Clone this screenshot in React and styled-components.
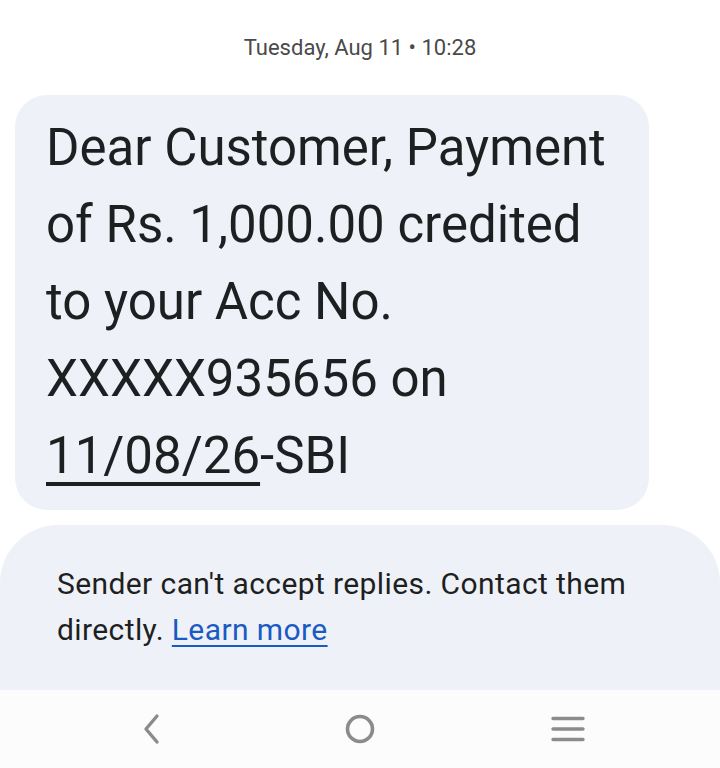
import React from 'react';
import styled, { createGlobalStyle } from 'styled-components';

const GlobalStyle = createGlobalStyle`
  html, body {
    margin: 0;
    padding: 0;
    background: #ffffff;
    font-family: Roboto, "Noto Sans", sans-serif;
  }
`;

const Screen = styled.div`
  width: 720px;
  height: 768px;
  display: flex;
  flex-direction: column;
  overflow: hidden;
  background: #ffffff;
`;

const Thread = styled.div`
  flex: 1;
  display: flex;
  flex-direction: column;
`;

const Stamp = styled.div`
  text-align: center;
  padding-top: 35px;
  height: 95px;
  box-sizing: border-box;
  font-size: 22px;
  color: #4a4a4a;
`;

const Bubble = styled.div`
  margin-left: 15px;
  width: 634px;
  box-sizing: border-box;
  padding: 14px 40px 16px 31px;
  background: #eef2f8;
  border-radius: 32px;
  font-size: 51px;
  line-height: 77px;
  color: #1e1f21;
`;

const DateLink = styled.span`
  text-decoration: underline;
  text-decoration-thickness: 4px;
  text-underline-offset: 9px;
`;

const Notice = styled.div`
  flex: 1;
  margin-top: 15px;
  box-sizing: border-box;
  padding: 36px 50px 0 57px;
  background: #eef2f8;
  border-radius: 58px 58px 0 0;
  font-size: 30px;
  letter-spacing: 0.4px;
  line-height: 46px;
  color: #1e1f21;
`;

const LearnMore = styled.a`
  color: #1a5ac2;
  text-decoration: underline;
  text-decoration-thickness: 2px;
  text-underline-offset: 5px;
`;

const NavBar = styled.nav`
  height: 78px;
  background: #fcfcfc;
  display: grid;
  grid-template-columns: repeat(3, 1fr);
  align-items: center;
  justify-items: center;
  padding: 0 48px;
`;

const NavButton = styled.div`
  width: 40px;
  height: 40px;
  display: flex;
  align-items: center;
  justify-content: center;
  color: #8b8b8b;
`;

const App = () => (
  <Screen>
    <GlobalStyle />
    <Thread>
      <Stamp>Tuesday, Aug 11 • 10:28</Stamp>
      <Bubble>
        Dear Customer, Payment of Rs. 1,000.00 credited to your Acc No. XXXXX935656 on{' '}
        <DateLink>11/08/26</DateLink>-SBI
      </Bubble>
      <Notice>
        Sender can't accept replies. Contact them directly.{' '}
        <LearnMore href="#">Learn more</LearnMore>
      </Notice>
    </Thread>
    <NavBar>
      <NavButton>
        <svg width="24" height="34" viewBox="0 0 24 34">
          <path d="M17 4 L6 17 L17 30" fill="none" stroke="currentColor" strokeWidth="3.4" strokeLinecap="round" strokeLinejoin="round" />
        </svg>
      </NavButton>
      <NavButton>
        <svg width="34" height="34" viewBox="0 0 34 34">
          <circle cx="17" cy="17" r="12.5" fill="none" stroke="currentColor" strokeWidth="3.6" />
        </svg>
      </NavButton>
      <NavButton>
        <svg width="36" height="32" viewBox="0 0 36 32">
          <path d="M3 5.5 H33 M3 16 H33 M3 26.5 H33" fill="none" stroke="currentColor" strokeWidth="3.4" strokeLinecap="round" />
        </svg>
      </NavButton>
    </NavBar>
  </Screen>
);

export default App;
